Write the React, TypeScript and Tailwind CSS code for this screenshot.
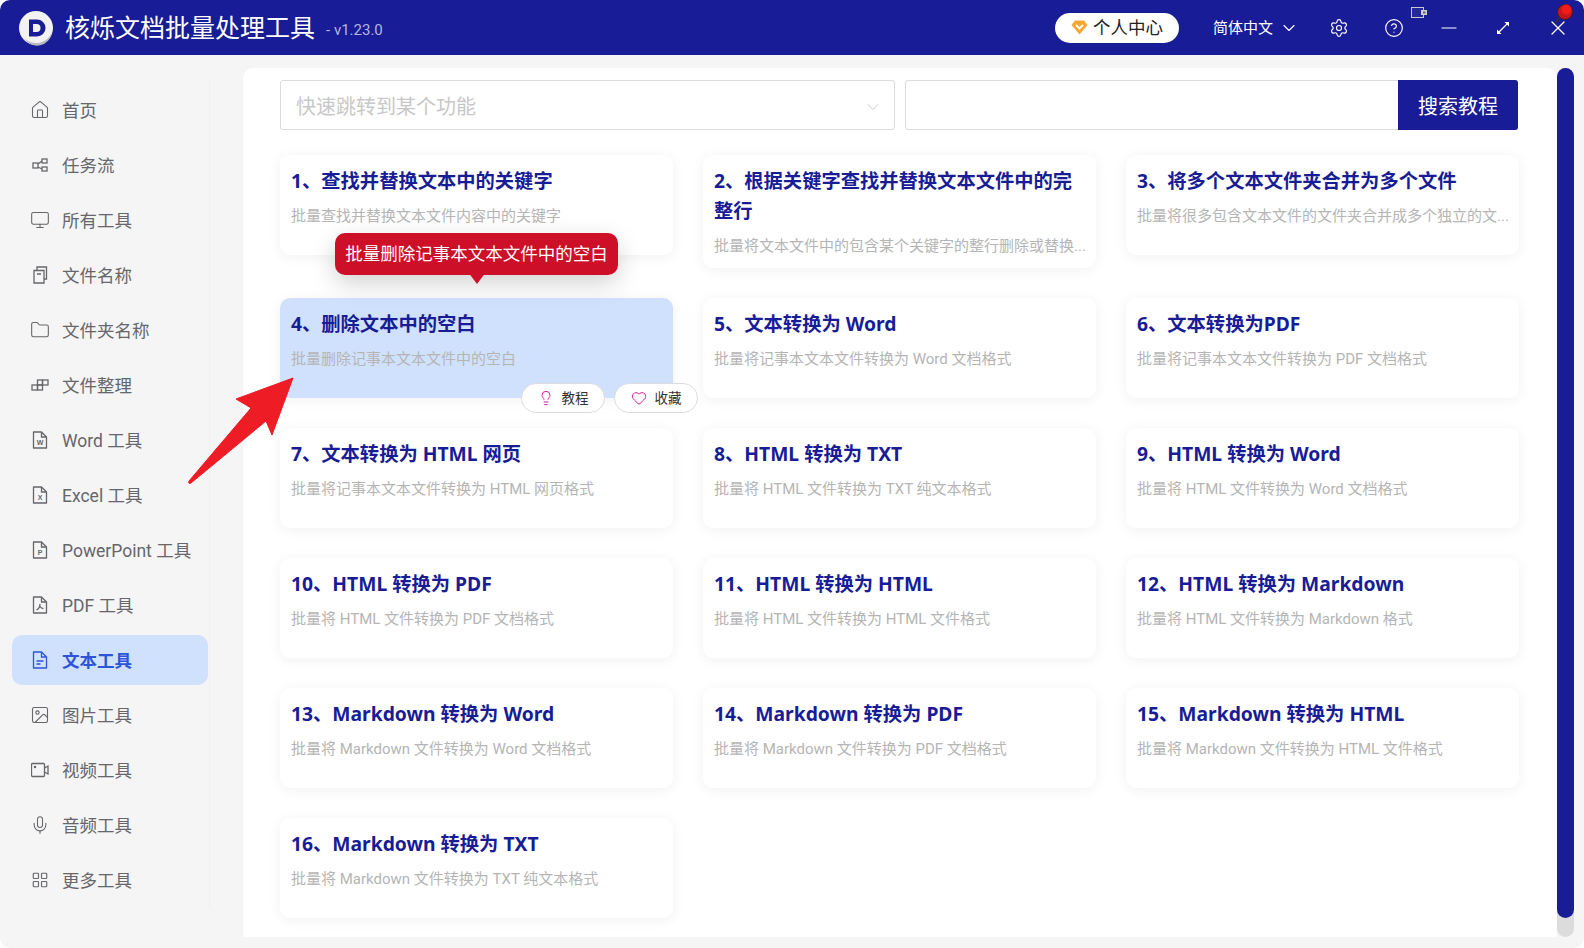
import { ChevronDown, CircleHelp, Heart, House, Image, Lightbulb, LayoutGrid, Mic, Minus, Monitor, Folder, Settings, X } from "lucide-react";
import type { ReactNode } from "react";

const iconProps = { width: 18, height: 18, viewBox: "0 0 18 18", fill: "none", stroke: "currentColor", strokeWidth: 1.3 };

function FileIcon({ letter, lines }: { letter?: string; lines?: boolean }) {
  return (
    <svg {...iconProps}>
      <path d="M2.500 1h8L15.500 6v11h-13z" strokeLinejoin="round" />
      <path d="M10.500 1v5h5" />
      {letter && (
        <text x="9" y="14" textAnchor="middle" fontSize="7" fontWeight="700" fill="currentColor" stroke="none" fontFamily="Liberation Sans, sans-serif">
          {letter}
        </text>
      )}
      {lines && <path d="M5.500 10h7M5.500 13h4" />}
    </svg>
  );
}

const menu: { label: string; icon: ReactNode; active?: boolean }[] = [
  { label: "首页", icon: <House size={20} strokeWidth={1.3} /> },
  {
    label: "任务流",
    icon: (
      <svg {...iconProps}>
        <rect x="2" y="7" width="5" height="5" />
        <rect x="11" y="3" width="5" height="4" />
        <rect x="11" y="11" width="5" height="4" />
        <path d="M7 8l4-3M7 11l4 2" />
      </svg>
    ),
  },
  { label: "所有工具", icon: <Monitor size={20} strokeWidth={1.3} /> },
  {
    label: "文件名称",
    icon: (
      <svg {...iconProps}>
        <path d="M3 4.500h10v12.500H3z" />
        <path d="M6 4.500V1h9.500v12H13M6 8h4" />
      </svg>
    ),
  },
  { label: "文件夹名称", icon: <Folder size={20} strokeWidth={1.3} /> },
  {
    label: "文件整理",
    icon: (
      <svg {...iconProps}>
        <rect x="1" y="9" width="5.500" height="5" />
        <rect x="6.500" y="9" width="5" height="5" />
        <rect x="6.500" y="4" width="5" height="5" />
        <rect x="11.500" y="4" width="5.500" height="5" />
      </svg>
    ),
  },
  { label: "Word 工具", icon: <FileIcon letter="W" /> },
  { label: "Excel 工具", icon: <FileIcon letter="X" /> },
  { label: "PowerPoint 工具", icon: <FileIcon letter="P" /> },
  {
    label: "PDF 工具",
    icon: (
      <svg {...iconProps}>
        <path d="M2.500 1h8L15.500 6v11h-13z" strokeLinejoin="round" />
        <path d="M10.500 1v5h5M9 8c0 3-1.500 5-3.500 6M9 10.500c1 1.500 2 2 3.500 2.200" />
      </svg>
    ),
  },
  { label: "文本工具", icon: <FileIcon lines />, active: true },
  { label: "图片工具", icon: <Image size={20} strokeWidth={1.3} /> },
  {
    label: "视频工具",
    icon: (
      <svg {...iconProps}>
        <rect x="0.500" y="2.500" width="13" height="13" rx="1" />
        <path d="M13.500 7l3.500-2v8l-3.500-2" />
        <circle cx="4" cy="6" r="0.600" fill="currentColor" />
      </svg>
    ),
  },
  { label: "音频工具", icon: <Mic size={20} strokeWidth={1.3} /> },
  { label: "更多工具", icon: <LayoutGrid size={18} strokeWidth={1.5} /> },
];

const cards: { title: string; desc: string }[] = [
  { title: "1、查找并替换文本中的关键字", desc: "批量查找并替换文本文件内容中的关键字" },
  { title: "2、根据关键字查找并替换文本文件中的完整行", desc: "批量将文本文件中的包含某个关键字的整行删除或替换..." },
  { title: "3、将多个文本文件夹合并为多个文件", desc: "批量将很多包含文本文件的文件夹合并成多个独立的文..." },
  { title: "4、删除文本中的空白", desc: "批量删除记事本文本文件中的空白" },
  { title: "5、文本转换为 Word", desc: "批量将记事本文本文件转换为 Word 文档格式" },
  { title: "6、文本转换为PDF", desc: "批量将记事本文本文件转换为 PDF 文档格式" },
  { title: "7、文本转换为 HTML 网页", desc: "批量将记事本文本文件转换为 HTML 网页格式" },
  { title: "8、HTML 转换为 TXT", desc: "批量将 HTML 文件转换为 TXT 纯文本格式" },
  { title: "9、HTML 转换为 Word", desc: "批量将 HTML 文件转换为 Word 文档格式" },
  { title: "10、HTML 转换为 PDF", desc: "批量将 HTML 文件转换为 PDF 文档格式" },
  { title: "11、HTML 转换为 HTML", desc: "批量将 HTML 文件转换为 HTML 文件格式" },
  { title: "12、HTML 转换为 Markdown", desc: "批量将 HTML 文件转换为 Markdown 格式" },
  { title: "13、Markdown 转换为 Word", desc: "批量将 Markdown 文件转换为 Word 文档格式" },
  { title: "14、Markdown 转换为 PDF", desc: "批量将 Markdown 文件转换为 PDF 文档格式" },
  { title: "15、Markdown 转换为 HTML", desc: "批量将 Markdown 文件转换为 HTML 文件格式" },
  { title: "16、Markdown 转换为 TXT", desc: "批量将 Markdown 文件转换为 TXT 纯文本格式" },
];

function PillButton({ icon, label }: { icon: ReactNode; label: string }) {
  return (
    <div className="flex h-[30px] w-[84px] items-center justify-center gap-[8px] rounded-full border border-[#dcdcdc] bg-white text-[13.500px] text-[#333]">
      <span className="flex w-[16px] justify-center text-[#d81fa0]">{icon}</span>
      <span className="pt-[1px]">{label}</span>
    </div>
  );
}

export default function App() {
  return (
    <div className="relative flex h-[948px] w-[1584px] flex-col overflow-hidden rounded-[10px] bg-[#f5f5f5] font-['Roboto','Noto_Sans_CJK_SC',sans-serif]">
      <header className="flex h-[55px] shrink-0 items-center bg-[#181c96] text-white">
        <svg width="36" height="36" viewBox="0 0 36 36" className="ml-[18px]">
          <circle cx="18" cy="18" r="17" fill="#f2f2f2" />
          <path d="M6 28a17 17 0 0 0 28-6 15 15 0 0 1-28 6z" fill="#b9b9c4" />
          <path d="M11 9.500h8a8.500 8.500 0 0 1 0 17h-8z" fill="#181c96" />
          <path d="M15 14h3.500a4 4 0 0 1 0 8H15z" fill="#f2f2f2" />
        </svg>
        <div className="ml-[11px] mt-[2px] text-[25px] leading-none">核烁文档批量处理工具</div>
        <div className="ml-[11px] mt-[6px] text-[15px] text-[#b3b6e0]">- v1.23.0</div>

        <div className="ml-auto flex h-[30px] w-[124px] items-center justify-center gap-[5px] rounded-full bg-white text-[17.500px] text-[#222]">
          <svg width="17" height="15" viewBox="0 0 17 15">
            <path d="M4 0.500h9l3.500 4.500L8.500 14.500 0.500 5z" fill="#f5a833" />
            <path d="M5 5l3.500 3.500L12 5" stroke="#fff" strokeWidth="1.800" fill="none" />
          </svg>
          <span className="pt-[2px]">个人中心</span>
        </div>
        <div className="ml-[34px] mt-[2px] text-[15px]">简体中文</div>
        <ChevronDown size={20} strokeWidth={1.3} className="ml-[6px]" />
        <Settings size={20} strokeWidth={1.4} className="ml-[30px]" />
        <CircleHelp size={20} strokeWidth={1.4} className="ml-[35px]" />
        <Minus size={24} strokeWidth={1.2} className="ml-[33px]" />
        <svg width="16" height="16" viewBox="0 0 16 16" className="ml-[34px]" fill="#fff" stroke="#fff">
          <path d="M3 13L13 3" strokeWidth="1.300" />
          <path d="M9.500 2h4.500v4.500zM2 9.500V14h4.500z" stroke="none" />
        </svg>
        <X size={24} strokeWidth={1.3} className="ml-[35px] mr-[14px]" />
      </header>

      {/* bits of other windows sitting on the title bar */}
      <svg width="16" height="11" viewBox="0 0 16 11" className="absolute left-[1411px] top-[7px]">
        <rect x="0.500" y="0.500" width="12" height="10" fill="#23289c" stroke="#c9c9c9" />
        <rect x="10" y="3" width="6" height="5" fill="#d0d0d0" />
        <rect x="12" y="4.500" width="2.500" height="2" fill="#666" />
      </svg>
      <svg width="20" height="22" viewBox="0 0 20 22" className="absolute left-[1554px] top-[2px]">
        <path d="M1 21l5-6" stroke="#333" strokeWidth="1.500" />
        <circle cx="11" cy="10" r="7.500" fill="#c9141a" stroke="#4a1c1c" strokeWidth="1" />
        <circle cx="12.500" cy="7.500" r="5" fill="#f01c1c" />
      </svg>

      <div className="flex min-h-0 flex-1">
        <aside className="w-[243px] shrink-0 pl-[12px] pt-[25px]">
          <nav className="flex h-[828px] w-[198px] flex-col gap-[5px] border-r border-[#f0f0f0] pr-[1px] pt-[5px]">
            {menu.map((item) => (
              <div
                key={item.label}
                className={
                  item.active
                    ? "flex h-[50px] shrink-0 items-center rounded-[10px] bg-[#d0e1fd] pl-[18px] text-[17.500px] font-bold text-[#2d54d8]"
                    : "flex h-[50px] shrink-0 items-center rounded-[10px] pl-[18px] text-[17.500px] text-[#66666b]"
                }
              >
                <span className="flex w-[20px] justify-center">{item.icon}</span>
                <span className="ml-[12px] mt-[2px]">{item.label}</span>
              </div>
            ))}
          </nav>
        </aside>

        <div className="mb-[11px] mr-[10px] mt-[13px] flex min-w-0 flex-1">
          <main className="relative min-w-0 flex-1 rounded-t-[10px] bg-white pl-[37px] pr-[38px] pt-[12px]">
            <div className="mr-[1px] flex h-[50px] gap-[10px]">
              <div className="flex w-[615px] items-center justify-between rounded-[3px] border border-[#dcdcdc] pl-[15px] pr-[11px] pt-[3px] text-[20px] text-[#c8c8c8]">
                快速跳转到某个功能
                <ChevronDown size={20} strokeWidth={1.1} />
              </div>
              <div className="flex flex-1 rounded-[3px] border border-[#dcdcdc]">
                <div className="flex-1" />
                <button className="-my-px -mr-px flex w-[120px] items-center justify-center rounded-r-[3px] bg-[#181c96] pt-[4px] text-[20px] text-white">
                  搜索教程
                </button>
              </div>
            </div>

            <div className="mt-[25px] grid grid-cols-[393px_393px_393px] items-start gap-[30px]">
              {cards.map((card, i) => (
                <div
                  key={card.title}
                  className={`relative min-h-[100px] rounded-[10px] px-[11px] pb-[12px] pt-[11px] shadow-[0_2px_14px_rgba(0,0,0,0.06)] ${i === 3 ? "bg-[#d0e1fd]" : "bg-white"}`}
                >
                  <div className="font-['Noto_Sans','Noto_Sans_CJK_SC',sans-serif] text-[19.300px] font-bold leading-[30px] text-[#181c96]">{card.title}</div>
                  <div className="mt-[10px] whitespace-nowrap text-[15px] leading-[20px] text-[#b5b5b5]">{card.desc}</div>
                  {i === 3 && (
                    <>
                      <div className="absolute bottom-[123px] left-[55px] z-10 flex h-[42px] w-[283px] items-center justify-center rounded-[10px] bg-[#cd1028] pt-[1px] text-[17.500px] text-white shadow-[0_8px_24px_rgba(0,0,0,0.18)]">
                        批量删除记事本文本文件中的空白
                        <div className="absolute left-1/2 top-[39px] -ml-[9px] h-0 w-0 border-x-[9px] border-t-[12px] border-x-transparent border-t-[#cd1028]" />
                      </div>
                      <div className="absolute left-[241px] top-[85px] z-10 flex gap-[9px]">
                        <PillButton icon={<Lightbulb size={18} strokeWidth={1.5} />} label="教程" />
                        <PillButton icon={<Heart size={16} strokeWidth={1.5} />} label="收藏" />
                      </div>
                    </>
                  )}
                </div>
              ))}
            </div>

            {/* annotation arrow over the page */}
            <svg width="120" height="120" viewBox="0 0 120 120" className="absolute left-[-65px] top-[305px] z-20">
              <path d="M115 5L58 26 73 35 11 108c-1 2 0 3 2 2L88 48 94 62z" fill="#ee1c25" stroke="#ee1c25" strokeLinejoin="round" />
            </svg>
          </main>
          <div className="relative h-full w-[17px] shrink-0 rounded-full bg-[#dcdcdc]">
            <div className="h-[850px] rounded-full bg-[#181c96]" />
          </div>
        </div>
      </div>
    </div>
  );
}
